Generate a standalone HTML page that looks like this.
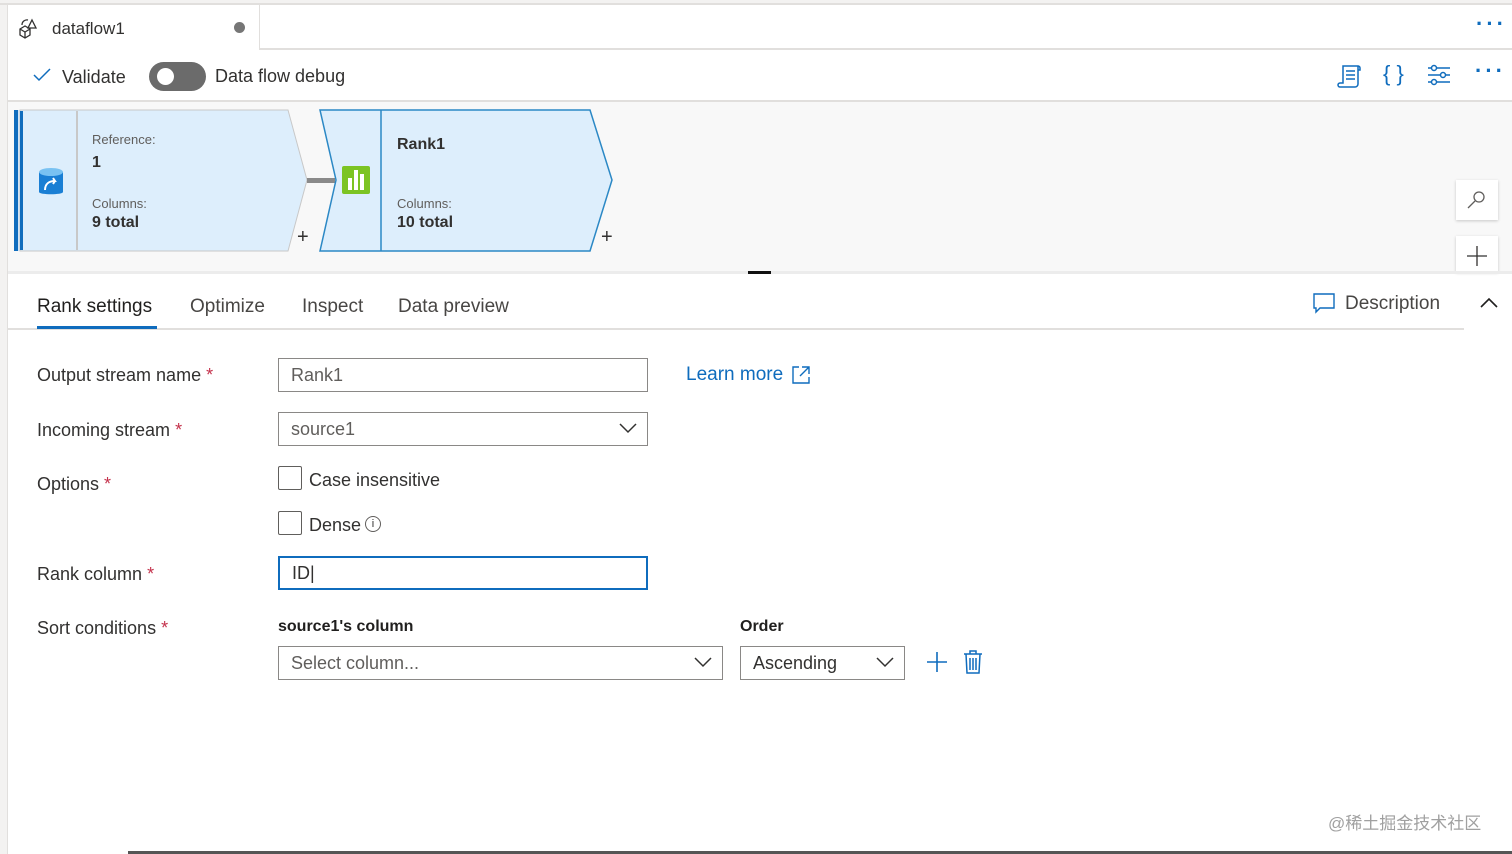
<!DOCTYPE html>
<html><head><style>
*{box-sizing:border-box;margin:0;padding:0}
body{width:1512px;height:854px;background:#fff;font-family:"Segoe UI","Liberation Sans",sans-serif;color:#323130;position:relative;overflow:hidden}
.a{position:absolute}
.lbl{font-size:18px;color:#323130}
.req{color:#c4314b}
.inp{position:absolute;border:1px solid #8a8886;background:#fff;height:34px;font-size:18px;padding:6px 12px;color:#605e5c}
.chev{position:absolute;right:10px;top:9px}
.cb{position:absolute;width:24px;height:24px;border:1px solid #605e5c;border-radius:2px;background:#fff}
.dots{position:absolute;font-size:22px;font-weight:bold;color:#0f6cbd;letter-spacing:3px}
</style></head><body>
<div class="a" style="left:0;top:0;width:1512px;height:5px;background:#f3f2f1;border-bottom:2px solid #e1dfdd"></div>
<div class="a" style="left:0;top:5px;width:7px;height:849px;background:#f3f2f1"></div>
<div class="a" style="left:7px;top:5px;width:1px;height:849px;background:#e1dfdd"></div>
<div class="a" style="left:259px;top:5px;width:1253px;height:45px;border-left:1px solid #e1dfdd;border-bottom:2px solid #e1dfdd"></div>
<svg class="a" style="left:18px;top:17px" width="24" height="22" viewBox="0 0 24 22" fill="none" stroke="#323130" stroke-width="1.3"><path d="M2 12l5-3 5 3v6l-5 3-5-3z M2 12l5 3 5-3 M7 15v6 M14 3l4 8h-8z M4 8a5 5 0 0 1 6-5"/></svg>
<div class="a" style="left:52px;top:19px;font-size:17px">dataflow1</div>
<div class="a" style="left:234px;top:22px;width:11px;height:11px;border-radius:50%;background:#767676"></div>
<div class="dots" style="left:1476px;top:11px">···</div>
<div class="a" style="left:8px;top:100px;width:1504px;height:2px;background:#e1dfdd"></div>
<svg class="a" style="left:32px;top:67px" width="20" height="16"><path d="M2 8l5 5L18 2" stroke="#0f6cbd" stroke-width="1.5" fill="none"/></svg>
<div class="a" style="left:62px;top:67px;font-size:18px">Validate</div>
<div class="a" style="left:149px;top:62px;width:57px;height:29px;border-radius:15px;background:#6b6b6b"></div>
<div class="a" style="left:157px;top:68px;width:17px;height:17px;border-radius:50%;background:#fff"></div>
<div class="a" style="left:215px;top:66px;font-size:18px">Data flow debug</div>
<svg class="a" style="left:1336px;top:62px" width="28" height="28" fill="none" stroke="#0f6cbd" stroke-width="1.5"><path d="M7 4h15v18a3 3 0 0 1-3 3H4a2 2 0 0 1 0-4h3z M22 4a2 2 0 0 1 2 2v2h-2 M10 9h9 M10 13h9 M10 17h9"/></svg>
<div class="a" style="left:1383px;top:61px;font-size:22px;color:#0f6cbd">{ }</div>
<svg class="a" style="left:1426px;top:62px" width="26" height="26" fill="none" stroke="#0f6cbd" stroke-width="1.5"><path d="M2 6h22 M2 13h22 M2 20h22"/><circle cx="8" cy="6" r="2.5" fill="#fff"/><circle cx="17" cy="13" r="2.5" fill="#fff"/><circle cx="8" cy="20" r="2.5" fill="#fff"/></svg>
<div class="dots" style="left:1475px;top:58px">···</div>
<div class="a" style="left:8px;top:102px;width:1504px;height:170px;background:#f8f8f8"></div>
<svg class="a" style="left:0;top:102px" width="640" height="170">
<rect x="14" y="8" width="4" height="141" fill="#0f6cbd"/>
<rect x="18" y="8" width="2" height="141" fill="#cfe4f7"/>
<path d="M20 8H288L307 78L288 149H20Z" fill="#ddeefc" stroke="#c8c8c8"/>
<rect x="20" y="9" width="3" height="139" fill="#0f6cbd"/>
<line x1="77" y1="9" x2="77" y2="148" stroke="#c8c8c8" stroke-width="2"/>
<rect x="307" y="76" width="28" height="5" fill="#8a8a8a"/>
<path d="M320 8H590L612 78L590 149H320L336 78Z" fill="#ddeefc" stroke="#2b88c5" stroke-width="1.5"/>
<line x1="381" y1="8" x2="381" y2="149" stroke="#2b88c5" stroke-width="1.5"/>
<rect x="342" y="64" width="28" height="28" rx="2" fill="#7cc423"/>
<rect x="348" y="76" width="4" height="12" fill="#fff"/><rect x="354" y="68" width="4" height="20" fill="#fff"/><rect x="360" y="72" width="4" height="16" fill="#fff"/>
<path d="M39 70v20c0 3 24 3 24 0V70z" fill="#1a7fd4"/><ellipse cx="51" cy="70" rx="12" ry="4" fill="#79c2f2"/>
<path d="M45 88c0-6 4-9 10-9l-2-3m2 3l-2 3" stroke="#fff" stroke-width="2" fill="none"/>
</svg>
<div class="a" style="left:92px;top:132px;font-size:13px;color:#605e5c">Reference:</div>
<div class="a" style="left:92px;top:154px;font-size:16px;font-weight:bold">1</div>
<div class="a" style="left:92px;top:196px;font-size:13px;color:#605e5c">Columns:</div>
<div class="a" style="left:92px;top:214px;font-size:16px;font-weight:bold">9 total</div>
<div class="a" style="left:397px;top:136px;font-size:16px;font-weight:bold">Rank1</div>
<div class="a" style="left:397px;top:196px;font-size:13px;color:#605e5c">Columns:</div>
<div class="a" style="left:397px;top:214px;font-size:16px;font-weight:bold">10 total</div>
<div class="a" style="left:297px;top:226px;font-size:20px">+</div>
<div class="a" style="left:601px;top:226px;font-size:20px">+</div>
<div class="a" style="left:1456px;top:180px;width:42px;height:40px;background:#fff;box-shadow:0 1px 3px rgba(0,0,0,.2)"></div>
<svg class="a" style="left:1466px;top:190px" width="20" height="20" fill="none" stroke="#605e5c" stroke-width="1.3"><circle cx="13" cy="7" r="5"/><path d="M9 11l-7 7"/></svg>
<div class="a" style="left:1456px;top:236px;width:42px;height:36px;background:#fff;box-shadow:0 1px 3px rgba(0,0,0,.2)"></div>
<svg class="a" style="left:1466px;top:245px" width="22" height="22" stroke="#323130" stroke-width="1.3"><path d="M11 1v20M1 11h20"/></svg>
<div class="a" style="left:8px;top:271px;width:1504px;height:3px;background:#ececec"></div>
<div class="a" style="left:748px;top:271px;width:23px;height:3px;background:#111"></div>
<div class="a" style="left:8px;top:328px;width:1456px;height:2px;background:#e1dfdd"></div>
<div class="a" style="left:37px;top:296px;font-size:19px;color:#201f1e">Rank settings</div>
<div class="a" style="left:37px;top:326px;width:120px;height:3px;background:#0f6cbd"></div>
<div class="a" style="left:190px;top:296px;font-size:19px;color:#484644">Optimize</div>
<div class="a" style="left:302px;top:296px;font-size:19px;color:#484644">Inspect</div>
<div class="a" style="left:398px;top:296px;font-size:19px;color:#484644">Data preview</div>
<svg class="a" style="left:1312px;top:292px" width="24" height="22" fill="none" stroke="#0f6cbd" stroke-width="1.4"><path d="M2 2h20v14H8l-4 4v-4H2z"/></svg>
<div class="a" style="left:1345px;top:293px;font-size:19px;color:#484644">Description</div>
<svg class="a" style="left:1480px;top:297px" width="18" height="12" fill="none" stroke="#201f1e" stroke-width="1.6"><path d="M1 10l8-8 8 8"/></svg>
<div class="a lbl" style="left:37px;top:365px">Output stream name <span class="req">*</span></div>
<div class="inp" style="left:278px;top:358px;width:370px">Rank1</div>
<div class="a" style="left:686px;top:364px;font-size:19px;color:#0f6cbd">Learn more</div>
<svg class="a" style="left:791px;top:365px" width="20" height="20" fill="none" stroke="#0f6cbd" stroke-width="1.4"><path d="M8 2H2v16h16v-6 M11 2h7v7 M18 2l-9 9"/></svg>
<div class="a lbl" style="left:37px;top:420px">Incoming stream <span class="req">*</span></div>
<div class="inp" style="left:278px;top:412px;width:370px">source1<svg class="chev" width="18" height="12" fill="none" stroke="#323130" stroke-width="1.5"><path d="M1 2l8 8 8-8"/></svg></div>
<div class="a lbl" style="left:37px;top:474px">Options <span class="req">*</span></div>
<div class="cb" style="left:278px;top:466px"></div>
<div class="a lbl" style="left:309px;top:470px">Case insensitive</div>
<div class="cb" style="left:278px;top:511px"></div>
<div class="a lbl" style="left:309px;top:515px">Dense</div>
<div class="a" style="left:365px;top:516px;width:16px;height:16px;border:1px solid #605e5c;border-radius:50%;font-size:11px;text-align:center;line-height:14px">i</div>
<div class="a lbl" style="left:37px;top:564px">Rank column <span class="req">*</span></div>
<div class="inp" style="left:278px;top:556px;width:370px;border:2px solid #0f6cbd;color:#323130;padding-top:5px">ID|</div>
<div class="a lbl" style="left:37px;top:618px">Sort conditions <span class="req">*</span></div>
<div class="a" style="left:278px;top:618px;font-size:16px;font-weight:bold;color:#201f1e">source1's column</div>
<div class="a" style="left:740px;top:618px;font-size:16px;font-weight:bold;color:#201f1e">Order</div>
<div class="inp" style="left:278px;top:646px;width:445px">Select column...<svg class="chev" width="18" height="12" fill="none" stroke="#323130" stroke-width="1.5"><path d="M1 2l8 8 8-8"/></svg></div>
<div class="inp" style="left:740px;top:646px;width:165px;color:#323130">Ascending<svg class="chev" width="18" height="12" fill="none" stroke="#323130" stroke-width="1.5"><path d="M1 2l8 8 8-8"/></svg></div>
<svg class="a" style="left:926px;top:651px" width="22" height="22" stroke="#0f6cbd" stroke-width="1.6"><path d="M11 1v20M1 11h20"/></svg>
<svg class="a" style="left:962px;top:650px" width="22" height="24" fill="none" stroke="#0f6cbd" stroke-width="1.5"><path d="M2 4h18 M8 4V1h6v3 M4 4l1 19h12l1-19 M8 8v12 M11 8v12 M14 8v12"/></svg>
<div class="a" style="left:1328px;top:809px;font-size:17px;color:#a0a0a0;font-family:'Liberation Sans','Noto Sans CJK SC',sans-serif">@稀土掘金技术社区</div>
<div class="a" style="left:128px;top:851px;width:1384px;height:3px;background:#555"></div>
</body></html>
